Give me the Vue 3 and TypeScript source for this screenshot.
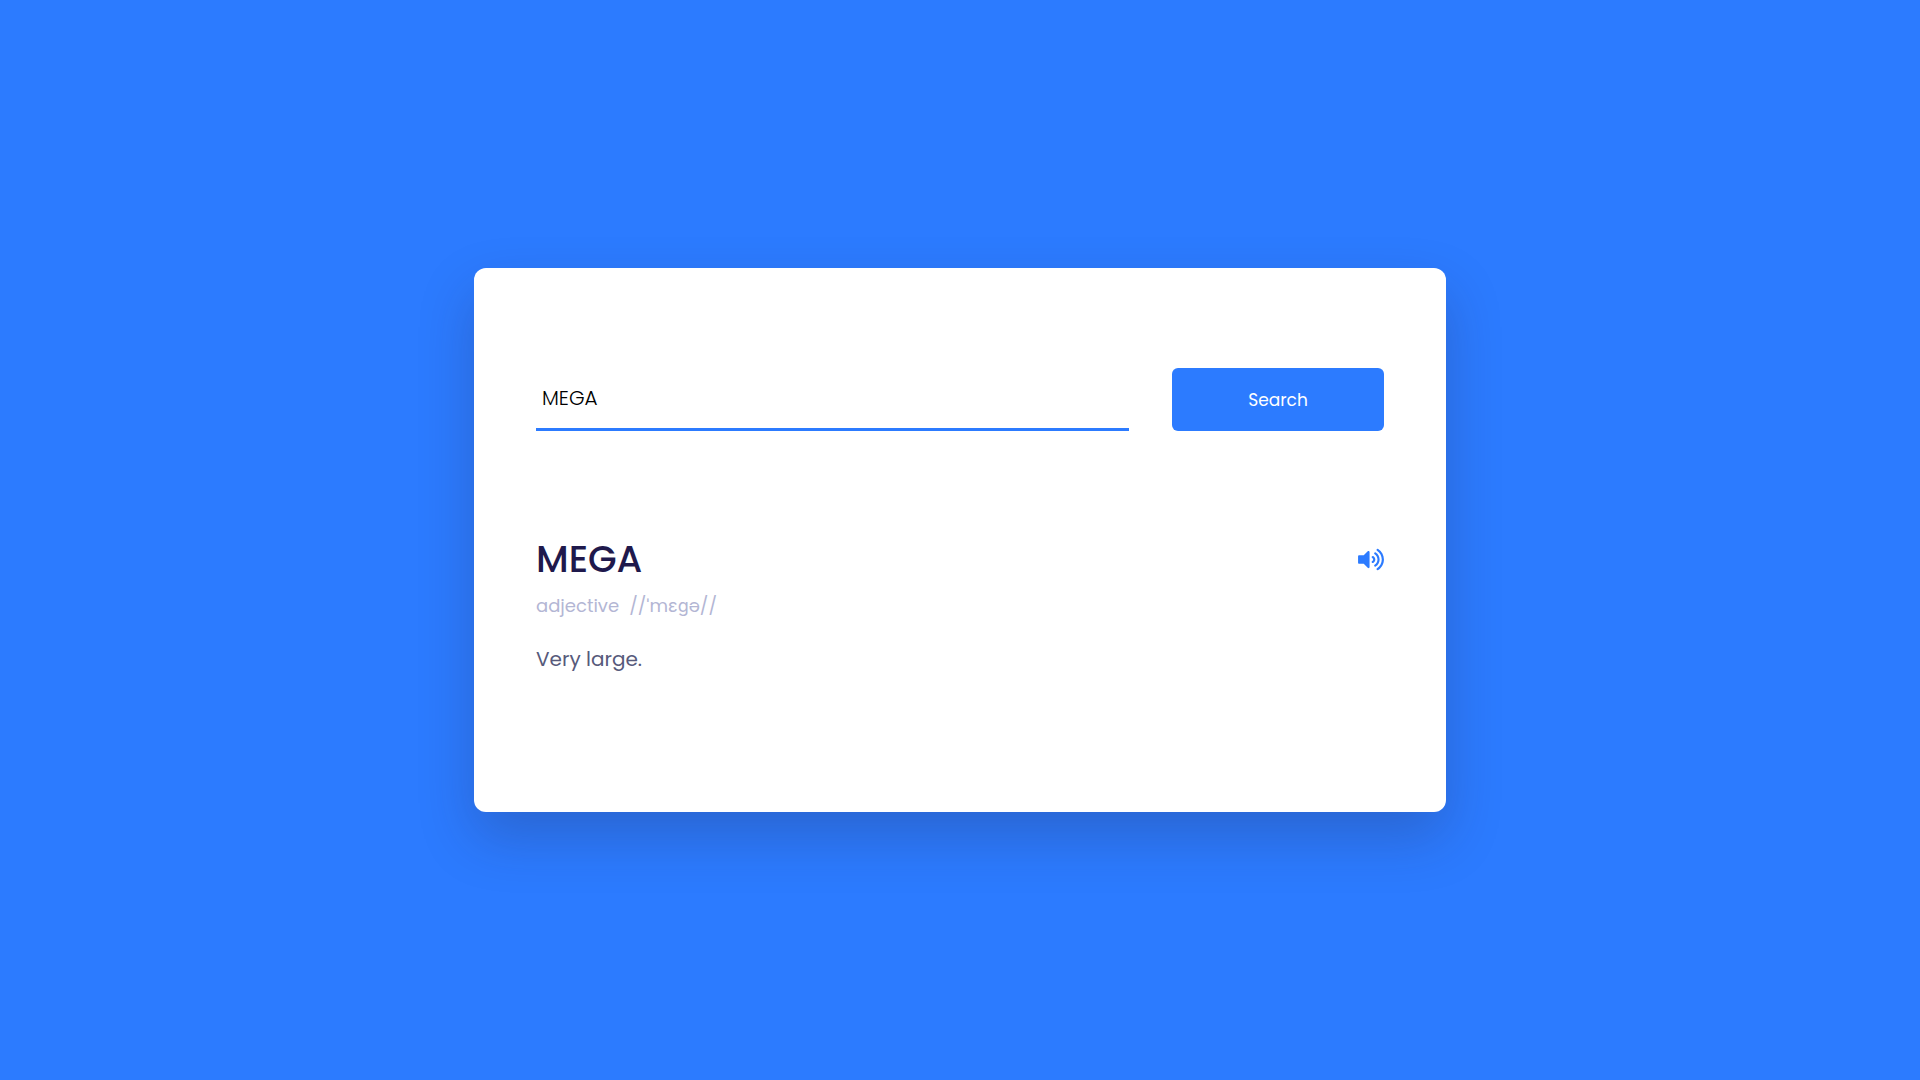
<script setup lang="ts">
import { ref } from 'vue'

interface Entry {
  word: string
  partOfSpeech: string
  phonetic: string
  meaning: string
}

const query = ref('MEGA')
const entry = ref<Entry>({
  word: 'MEGA',
  partOfSpeech: 'adjective',
  phonetic: '/ˈmɛɡə/',
  meaning: 'Very large.',
})

function search(): void {
  const word = query.value.trim()
  if (word) entry.value = { ...entry.value, word }
}

function speak(): void {
  window.speechSynthesis?.speak(new SpeechSynthesisUtterance(entry.value.word))
}
</script>

<template>
  <main class="page">
    <section class="card">
      <form class="search" @submit.prevent="search">
        <input v-model="query" class="field" type="text" aria-label="Word" />
        <button class="submit" type="submit">Search</button>
      </form>
      <article class="result">
        <header class="word">
          <h1>{{ entry.word }}</h1>
          <button class="sound" type="button" aria-label="Play pronunciation" @click="speak">
            <svg viewBox="0 0 576 512" aria-hidden="true">
              <path
                fill="currentColor"
                d="M215.03 71.05L126.06 160H24c-13.26 0-24 10.74-24 24v144c0 13.25 10.74 24 24 24h102.06l88.97 88.95c15.03 15.03 40.97 4.47 40.97-16.97V88.02c0-21.46-25.96-31.98-40.97-16.97zm233.32-51.12c-11.17-7.33-26.18-4.24-33.51 6.95-7.34 11.17-4.22 26.18 6.95 33.51 66.27 43.49 105.82 116.6 105.82 195.58 0 78.98-39.55 152.09-105.82 195.58-11.17 7.32-14.29 22.34-6.95 33.5 7.04 10.71 21.93 14.56 33.51 6.95C528.27 439.58 576 351.33 576 256S528.27 72.43 448.35 19.93zM480 256c0-63.53-32.06-121.94-85.77-156.24-11.19-7.14-26.03-3.82-33.12 7.46s-3.78 26.21 7.41 33.36C408.27 165.97 432 209.11 432 256s-23.73 90.03-63.48 115.42c-11.19 7.14-14.5 22.07-7.41 33.36 6.51 10.36 21.12 15.14 33.12 7.46C447.94 377.94 480 319.54 480 256zm-141.77-76.87c-11.58-6.33-26.19-2.16-32.61 9.45-6.39 11.61-2.16 26.2 9.45 32.61C327.98 228.28 336 241.63 336 256c0 14.38-8.02 27.72-20.92 34.81-11.61 6.41-15.84 21-9.45 32.61 6.43 11.66 21.05 15.8 32.61 9.45 28.23-15.55 45.77-45 45.77-76.88s-17.54-61.32-45.78-76.86z"
              />
            </svg>
          </button>
        </header>
        <div class="details">
          <span>{{ entry.partOfSpeech }}</span>
          <span>/{{ entry.phonetic }}/</span>
        </div>
        <p class="meaning">{{ entry.meaning }}</p>
      </article>
    </section>
  </main>
</template>

<style>
body {
  margin: 0;
  background: #2c7bff;
}
</style>

<style scoped>
.page {
  display: flex;
  align-items: center;
  justify-content: center;
  min-height: 100vh;
}

.page,
.field,
.submit {
  font-family: Poppins, Inter, 'Noto Sans', sans-serif;
}

.card {
  box-sizing: border-box;
  width: 90vmin;
  padding: 100px 62px 139px;
  border-radius: 12px;
  background: #fff;
  box-shadow: 0 25px 56px rgba(38, 33, 61, 0.24);
}

.search {
  display: flex;
  gap: 43px;
}

.field {
  box-sizing: border-box;
  flex: 1;
  min-width: 0;
  height: 63px;
  padding: 0 6px;
  border: 0;
  border-bottom: 3px solid #2c7bff;
  border-radius: 0;
  outline: none;
  background: transparent;
  color: #000;
  font-size: 20px;
  font-weight: 300;
}

.submit {
  width: 25%;
  border: 0;
  border-radius: 6px;
  background: #2c7bff;
  color: #fff;
  font-size: 17px;
  cursor: pointer;
}

.result {
  margin-top: 100px;
}

.word {
  display: flex;
  align-items: center;
  justify-content: space-between;
}

h1 {
  margin: 0;
  color: #1f194c;
  font-size: 37px;
  font-weight: 500;
  line-height: 56px;
}

.sound {
  display: flex;
  padding: 0;
  border: 0;
  background: transparent;
  color: #2c7bff;
  cursor: pointer;
}

.sound svg {
  width: 26px;
  height: 23px;
}

.details {
  display: flex;
  gap: 10px;
  margin: 4px 0 24px;
  color: #b3b6d4;
  font-size: 18px;
  line-height: 30px;
}

.meaning {
  margin: 0;
  color: #575a7b;
  font-size: 20px;
  line-height: 28px;
}
</style>
